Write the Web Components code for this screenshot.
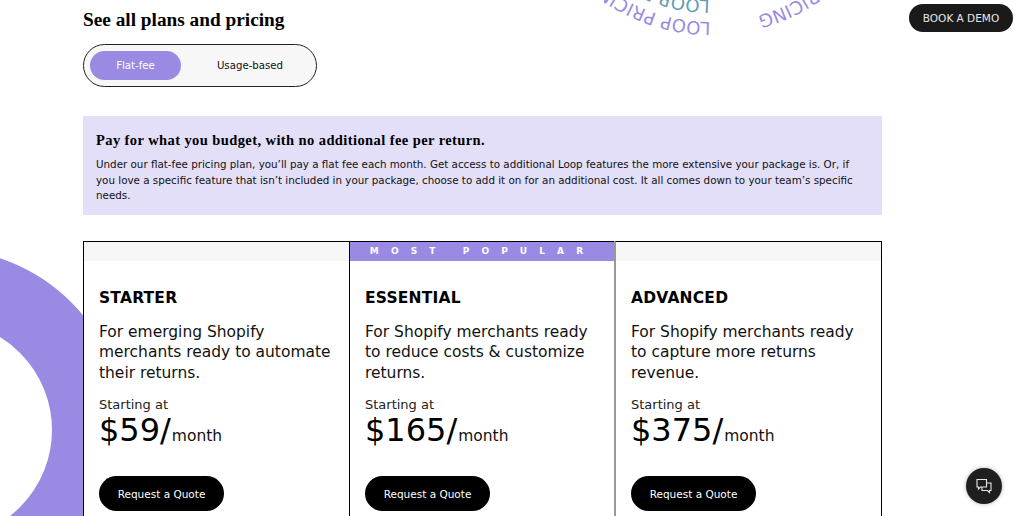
<!DOCTYPE html>
<html lang="en">
<head>
<meta charset="utf-8">
<title>Plans and pricing</title>
<style>
  html, body { margin: 0; height: 516px; overflow: hidden; background: #fff; }
  body { position: relative; font-family: "DejaVu Sans", sans-serif; color: #000; }
</style>
</head>
<body>
<deco-ring></deco-ring>
<spin-text></spin-text>
<pricing-section heading="See all plans and pricing">
  <plan-toggle slot="toggle" active="Flat-fee" other="Usage-based"></plan-toggle>
  <info-banner slot="banner" heading="Pay for what you budget, with no additional fee per return.">
    Under our flat-fee pricing plan, you’ll pay a flat fee each month. Get access to additional Loop features the more extensive your package is. Or, if you love a specific feature that isn’t included in your package, choose to add it on for an additional cost. It all comes down to your team’s specific needs.
  </info-banner>
  <plan-card name="STARTER" price="$59">For emerging Shopify merchants ready to automate their returns.</plan-card>
  <plan-card name="ESSENTIAL" price="$165" ribbon="MOST POPULAR">For Shopify merchants ready to reduce costs &amp; customize returns.</plan-card>
  <plan-card name="ADVANCED" price="$375">For Shopify merchants ready to capture more returns revenue.</plan-card>
</pricing-section>
<book-demo>BOOK A DEMO</book-demo>
<chat-fab></chat-fab>

<script>
  // ---- page section: heading, toggle, banner, then the three cards in a grid ----
  class PricingSection extends HTMLElement {
    connectedCallback() {
      this.attachShadow({ mode: "open" }).innerHTML = `
        <style>
          :host { display: block; position: relative; width: 799px; margin-left: 83px; padding-top: 9px; }
          h2 { margin: 0; font: bold 19.3px/22px "Liberation Serif", serif; }
          .toggle { margin-top: 13px; }
          .banner { margin-top: 29px; }
          .cards { display: grid; grid-template-columns: 266px 266px 267px; margin-top: 26px; }
        </style>
        <h2>${this.getAttribute("heading")}</h2>
        <div class="toggle"><slot name="toggle"></slot></div>
        <div class="banner"><slot name="banner"></slot></div>
        <div class="cards"><slot></slot></div>`;
    }
  }

  class PlanToggle extends HTMLElement {
    connectedCallback() {
      this.attachShadow({ mode: "open" }).innerHTML = `
        <style>
          :host { display: flex; box-sizing: border-box; width: 234px; height: 43px; padding: 6px; border: 1px solid #222; border-radius: 22px; background: #f7f7f7; font: 10.2px "DejaVu Sans", sans-serif; }
          span { display: flex; align-items: center; justify-content: center; }
          .on { width: 91px; height: 29px; border-radius: 15px; background: #9b8ae4; color: #fff; }
          .off { flex: 1; padding-left: 9px; color: #111; }
        </style>
        <span class="on">${this.getAttribute("active")}</span>
        <span class="off">${this.getAttribute("other")}</span>`;
    }
  }

  class InfoBanner extends HTMLElement {
    connectedCallback() {
      this.attachShadow({ mode: "open" }).innerHTML = `
        <style>
          :host { display: block; box-sizing: border-box; height: 99px; padding: 15px 13px 0; background: #e3dff9; }
          h3 { margin: 0 0 8px; font: bold 14.5px/18px "Liberation Serif", serif; letter-spacing: .41px; }
          p { margin: 0; font: 10.33px/15.5px "DejaVu Sans", sans-serif; color: #111; }
        </style>
        <h3>${this.getAttribute("heading")}</h3>
        <p><slot></slot></p>`;
    }
  }

  class PlanCard extends HTMLElement {
    connectedCallback() {
      const ribbon = this.getAttribute("ribbon");
      this.attachShadow({ mode: "open" }).innerHTML = `
        <style>
          :host { display: block; box-sizing: border-box; height: 300px; border: 1px solid #000; border-right: 0; background: #fff; font-family: "DejaVu Sans", sans-serif; }
          :host(:last-child) { border-right: 1px solid #000; border-left-color: #999; box-shadow: -1px 0 0 #999; }
          .strip { height: 19px; background: #f7f7f7; color: #fff; font: bold 9px/19px "DejaVu Sans", sans-serif; letter-spacing: 12.1px; text-align: center; white-space: pre; }
          .strip.pop { background: #9b8ae4; }
          .body { padding: 27px 15px 0; }
          h4 { margin: 0; font: bold 15.5px/20px "DejaVu Sans", sans-serif; letter-spacing: .2px; }
          p { margin: 13.7px 0 0; font-size: 15.47px; line-height: 20.5px; color: #111; }
          .from { margin-top: 14px; font-size: 13px; line-height: 16px; color: #222; }
          .price { display: flex; align-items: baseline; font-size: 32px; line-height: 34px; }
          .price small { font-size: 15.5px; margin-left: 1px; color: #111; }
          a { display: flex; align-items: center; justify-content: center; width: 125px; height: 35px; margin-top: 23px; border-radius: 18px; background: #000; color: #fff; font-size: 10.5px; }
        </style>
        <div class="strip ${ribbon ? "pop" : ""}">${ribbon || ""}</div>
        <div class="body">
          <h4>${this.getAttribute("name")}</h4>
          <p><slot></slot></p>
          <div class="from">Starting at</div>
          <div class="price">${this.getAttribute("price")}/<small>month</small></div>
          <a>Request a Quote</a>
        </div>`;
    }
  }

  // ---- things that float over the page ----
  class BookDemo extends HTMLElement {
    connectedCallback() {
      this.attachShadow({ mode: "open" }).innerHTML = `
        <style>
          :host { position: absolute; left: 909px; top: 4px; display: flex; align-items: center; justify-content: center; width: 104px; height: 28px; border-radius: 14px; background: #1a1a1a; color: #e8e8e8; font: 10.5px "DejaVu Sans", sans-serif; }
        </style>
        <slot></slot>`;
    }
  }

  class ChatFab extends HTMLElement {
    connectedCallback() {
      this.attachShadow({ mode: "open" }).innerHTML = `
        <style>
          :host { position: absolute; left: 966px; top: 468px; display: flex; align-items: center; justify-content: center; width: 36px; height: 36px; border-radius: 50%; background: #1f1f1f; box-shadow: 0 0 4px rgba(0,0,0,.3); }
        </style>
        <svg width="18" height="18" viewBox="0 0 18 18" fill="none" stroke="#e8e8e8" stroke-width="1.1">
          <path d="M2 2.5h9.5v7.5H5.5L3.5 12V10H2z"/>
          <path d="M11.5 6H16v7.5h-1.5V15.5L12.5 13.5H7V10"/>
        </svg>`;
    }
  }

  class DecoRing extends HTMLElement {
    connectedCallback() {
      this.attachShadow({ mode: "open" }).innerHTML = `
        <style>
          :host { position: absolute; left: -238px; top: 249px; box-sizing: border-box; width: 362px; height: 362px; border: 72px solid #9b8ae4; border-radius: 50%; }
        </style>`;
    }
  }

  // text running round a big circle, only the bottom of it is on screen
  class SpinText extends HTMLElement {
    connectedCallback() {
      const cx = 711, cy = -156;
      // clockwise circle of radius r, starting at angle a (degrees from straight down)
      const arc = (r, a) => {
        const t = (90 + a) * Math.PI / 180;
        const x = cx + r * Math.cos(t), y = cy + r * Math.sin(t);
        const ox = cx - r * Math.cos(t), oy = cy - r * Math.sin(t);
        return `M${x} ${y}A${r} ${r} 0 1 1 ${ox} ${oy}A${r} ${r} 0 1 1 ${x} ${y}`;
      };
      this.attachShadow({ mode: "open" }).innerHTML = `
        <style>
          :host { position: absolute; left: 0; top: 0; width: 1024px; height: 60px; overflow: hidden; }
          svg { display: block; }
          text { font: 18px "DejaVu Sans", sans-serif; }
        </style>
        <svg width="1024" height="60">
          <defs>
            <path id="a" d="${arc(178, 0.2)}"/>
            <path id="b" d="${arc(178, -56.4)}"/>
            <path id="c" d="${arc(156, 0.5)}"/>
          </defs>
          <text fill="#9b8ae4"><textPath href="#a">LOOP PRICING</textPath></text>
          <text fill="#9b8ae4"><textPath href="#b">LOOP PRICING</textPath></text>
          <text fill="#5f9cb3"><textPath href="#c">LOOP PRICING</textPath></text>
        </svg>`;
    }
  }

  customElements.define("pricing-section", PricingSection);
  customElements.define("plan-toggle", PlanToggle);
  customElements.define("info-banner", InfoBanner);
  customElements.define("plan-card", PlanCard);
  customElements.define("book-demo", BookDemo);
  customElements.define("chat-fab", ChatFab);
  customElements.define("deco-ring", DecoRing);
  customElements.define("spin-text", SpinText);
</script>
</body>
</html>
